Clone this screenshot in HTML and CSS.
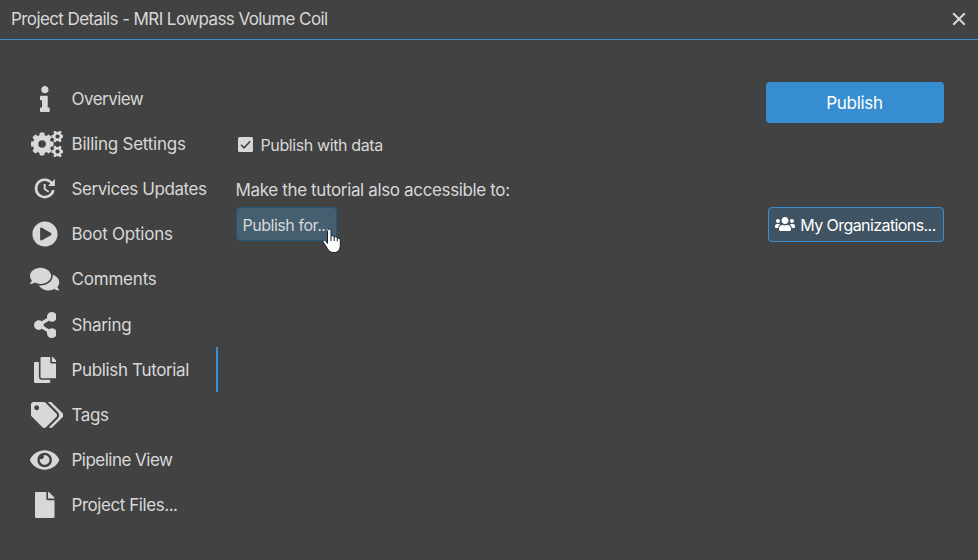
FILE: index.html
```html
<!DOCTYPE html>
<html lang="en">
<head>
<meta charset="utf-8">
<title>Project Details</title>
<link rel="stylesheet" href="styles.css">
</head>
<body>
<div class="dialog">
  <header class="titlebar">
    <h1 class="title">Project Details - MRI Lowpass Volume Coil</h1>
    <button class="close" aria-label="Close"><svg width="14" height="14" viewBox="0 0 14 14"><path d="M1.2 1.2L12.8 12.8M12.8 1.2L1.2 12.8" fill="none" stroke="currentColor" stroke-width="2"/></svg></button>
  </header>
  <div class="body">
    <nav class="menu">
      <a class="item"><span class="icon"><svg viewBox="0 0 192 512"><path d="M20 424.229h20V279.771H20c-11.046 0-20-8.954-20-20V212c0-11.046 8.954-20 20-20h112c11.046 0 20 8.954 20 20v212.229h20c11.046 0 20 8.954 20 20V492c0 11.046-8.954 20-20 20H20c-11.046 0-20-8.954-20-20v-47.771c0-11.046 8.954-20 20-20zM96 0C56.235 0 24 32.235 24 72s32.235 72 72 72 72-32.235 72-72S135.764 0 96 0z"/></svg></span><span class="label overview">Overview</span></a>
      <a class="item"><span class="icon wide"><svg viewBox="0 0 640 512">
        <defs>
          <rect id="tooth" x="-48" y="-228" width="96" height="100" rx="22"/>
          <rect id="tooth-small" x="-27" y="-120" width="54" height="60" rx="12"/>
          <g id="gear-small">
            <circle r="66" fill="none" stroke="currentColor" stroke-width="50"/>
            <use href="#tooth-small" transform="rotate(30)"/><use href="#tooth-small" transform="rotate(90)"/><use href="#tooth-small" transform="rotate(150)"/><use href="#tooth-small" transform="rotate(210)"/><use href="#tooth-small" transform="rotate(270)"/><use href="#tooth-small" transform="rotate(330)"/>
          </g>
        </defs>
        <g transform="translate(218 256)">
          <circle r="128" fill="none" stroke="currentColor" stroke-width="108"/>
          <use href="#tooth"/><use href="#tooth" transform="rotate(45)"/><use href="#tooth" transform="rotate(90)"/><use href="#tooth" transform="rotate(135)"/><use href="#tooth" transform="rotate(180)"/><use href="#tooth" transform="rotate(225)"/><use href="#tooth" transform="rotate(270)"/><use href="#tooth" transform="rotate(315)"/>
        </g>
        <use href="#gear-small" transform="translate(522 108)"/>
        <use href="#gear-small" transform="translate(522 404)"/>
      </svg></span><span class="label billing">Billing Settings</span></a>
      <a class="item"><span class="icon"><svg viewBox="0 0 26 26"><path d="M20.200 7.900A8.700 8.700 0 1 0 21.300 14" fill="none" stroke="currentColor" stroke-width="2.600"/><path d="M22.900 3v7h-7zM11.700 8h1.900v4.700l3.700 2.200-1 1.500-4.600-2.800z"/></svg></span><span class="label services">Services Updates</span></a>
      <a class="item"><span class="icon"><svg viewBox="0 0 512 512"><path d="M256 8C119 8 8 119 8 256s111 248 248 248 248-111 248-248S393 8 256 8zm115.700 272l-176 101c-15.800 8.800-35.700-2.500-35.700-21V152c0-18.400 19.800-29.800 35.700-21l176 107c16.400 9.200 16.400 32.900 0 42z"/></svg></span><span class="label boot">Boot Options</span></a>
      <a class="item"><span class="icon"><svg viewBox="0 0 576 512"><path d="M416 192c0-88.400-93.100-160-208-160S0 103.600 0 192c0 34.300 14.100 65.900 38 92-13.400 30.200-35.500 54.200-35.800 54.500-2.200 2.300-2.800 5.700-1.500 8.700S4.800 352 8 352c36.600 0 66.900-12.300 88.700-25 32.200 15.700 70.300 25 111.300 25 114.900 0 208-71.600 208-160zm122 220c23.900-26 38-57.700 38-92 0-66.900-53.500-124.200-129.300-148.100.9 6.600 1.300 13.300 1.300 20.100 0 105.900-107.700 192-240 192-10.800 0-21.300-.8-31.700-1.900C207.800 439.600 281.800 480 368 480c41 0 79.100-9.200 111.300-25 21.800 12.700 52.100 25 88.700 25 3.200 0 6.100-1.900 7.300-4.800 1.300-2.900.7-6.300-1.500-8.700-.3-.3-22.400-24.200-35.800-54.500z"/></svg></span><span class="label comments">Comments</span></a>
      <a class="item"><span class="icon"><svg viewBox="0 0 448 512"><path d="M352 320c-22.608 0-43.387 7.819-59.790 20.895l-102.486-64.054a96.551 96.551 0 0 0 0-41.683l102.486-64.054C308.613 184.181 329.392 192 352 192c53.019 0 96-42.981 96-96S405.019 0 352 0s-96 42.981-96 96c0 7.158.790 14.130 2.276 20.841L155.790 180.895C139.387 167.819 118.608 160 96 160c-53.019 0-96 42.981-96 96s42.981 96 96 96c22.608 0 43.387-7.819 59.790-20.895l102.486 64.054A96.301 96.301 0 0 0 256 416c0 53.019 42.981 96 96 96s96-42.981 96-96-42.981-96-96-96z"/></svg></span><span class="label sharing">Sharing</span></a>
      <a class="item active"><span class="icon"><svg viewBox="0 0 448 512"><path d="M320 448v40c0 13.255-10.745 24-24 24H24c-13.255 0-24-10.745-24-24V120c0-13.255 10.745-24 24-24h72v296c0 30.879 25.121 56 56 56h168zm0-344V0H152c-13.255 0-24 10.745-24 24v368c0 13.255 10.745 24 24 24h272c13.255 0 24-10.745 24-24V128H344c-13.200 0-24-10.800-24-24zm120.971-31.029L375.029 7.029A24 24 0 0 0 358.059 0H352v96h96v-6.059a24 24 0 0 0-7.029-16.970z"/></svg></span><span class="label tutorial">Publish Tutorial</span></a>
      <a class="item"><span class="icon wide"><svg viewBox="0 0 640 512"><path d="M497.941 225.941L286.059 14.059A48 48 0 0 0 252.118 0H48C21.490 0 0 21.490 0 48v204.118a48 48 0 0 0 14.059 33.941l211.882 211.882c18.744 18.745 49.136 18.746 67.882 0l204.118-204.118c18.745-18.745 18.745-49.137 0-67.882zM112 160c-26.510 0-48-21.490-48-48s21.490-48 48-48 48 21.490 48 48-21.490 48-48 48zm513.941 133.823L421.823 497.941c-18.745 18.745-49.137 18.745-67.882 0l-.360-.360L527.640 323.522c16.999-16.999 26.360-39.600 26.360-63.640s-9.362-46.641-26.360-63.640L331.397 0h48.721a48 48 0 0 1 33.941 14.059l211.882 211.882c18.745 18.745 18.745 49.137 0 67.882z"/></svg></span><span class="label tags">Tags</span></a>
      <a class="item"><span class="icon"><svg viewBox="0 0 576 512"><path d="M572.520 241.400C518.290 135.590 410.930 64 288 64S57.680 135.640 3.480 241.410a32.350 32.350 0 0 0 0 29.190C57.710 376.410 165.070 448 288 448s230.320-71.640 284.520-177.410a32.350 32.350 0 0 0 0-29.190zM288 400a144 144 0 1 1 144-144 143.930 143.930 0 0 1-144 144zm0-240a95.310 95.310 0 0 0-25.310 3.790 47.850 47.850 0 0 1-66.900 66.900A95.780 95.780 0 1 0 288 160z"/></svg></span><span class="label pipeline">Pipeline View</span></a>
      <a class="item"><span class="icon"><svg viewBox="0 0 384 512"><path d="M224 136V0H24C10.700 0 0 10.700 0 24v464c0 13.300 10.700 24 24 24h336c13.300 0 24-10.700 24-24V160H248c-13.200 0-24-10.800-24-24zm160-14.100v6.100H256V0h6.100c6.400 0 12.500 2.500 17 7l97.900 98c4.500 4.500 7 10.600 7 16.900z"/></svg></span><span class="label files">Project Files...</span></a>
    </nav>
    <main class="content">
      <div class="row first"><button class="publish">Publish</button></div>
      <label class="check"><svg width="15" height="15" viewBox="0 0 15 15"><rect width="15" height="15" rx="1.500"/><path d="M3 7.800l3 3 6.200-6.600" fill="none" stroke="#424242" stroke-width="1.500"/></svg><span>Publish with data</span></label>
      <p class="note">Make the tutorial also accessible to:</p>
      <div class="row">
        <button class="for">Publish for...
          <svg class="cursor" width="20" height="26" viewBox="0 0 20 26"><path d="M5.500 15.500V3.300c0-3 3.500-3 3.500 0V8c1.700-.8 3 0 3.200 1 1.600-.7 2.900.1 3.100 1.300 1.800-.5 3 .5 3 2.400v4.500c0 4-2 7.300-6.300 7.300-4 0-5-1.500-6.700-4.200l-3.800-5.800c-1.200-2 .8-3.200 2.300-1.600z" fill="#fff" stroke="#1c1f2b" stroke-width="1"/><path d="M9 8v5M12.200 9v4M15.300 10.300V13.500" stroke="#1c1f2b" fill="none"/></svg>
        </button>
        <button class="orgs"><svg width="20" height="16" viewBox="0 0 640 512"><path d="M96 224c35.300 0 64-28.700 64-64s-28.700-64-64-64-64 28.700-64 64 28.700 64 64 64zm448 0c35.300 0 64-28.700 64-64s-28.700-64-64-64-64 28.700-64 64 28.700 64 64 64zm32 32h-64c-17.600 0-33.500 7.100-45.100 18.600 40.300 22.100 68.900 62 75.100 109.400h66c17.700 0 32-14.300 32-32v-32c0-35.300-28.700-64-64-64zm-256 0c61.900 0 112-50.100 112-112S381.900 32 320 32 208 82.100 208 144s50.100 112 112 112zm76.800 32h-8.300c-20.800 10-43.900 16-68.500 16s-47.600-6-68.500-16h-8.300C179.600 288 128 339.600 128 403.200V432c0 26.500 21.500 48 48 48h288c26.500 0 48-21.500 48-48v-28.800c0-63.600-51.600-115.200-115.200-115.200zm-223.700-13.400C161.500 263.100 145.600 256 128 256H64c-35.300 0-64 28.700-64 64v32c0 17.700 14.300 32 32 32h65.900c6.300-47.400 34.900-87.300 75.200-109.400z"/></svg><span>My Organizations...</span></button>
      </div>
    </main>
  </div>
</div>
</body>
</html>
```
FILE: styles.css
```css
* { box-sizing: border-box; }
body { margin: 0; background: #424242; color: #d8d8d8; font-family: Inter, "Liberation Sans", sans-serif; font-size: 17px; }
svg { fill: currentColor; flex: none; display: block; }
button { font: inherit; color: inherit; border: 0; background: none; padding: 0; white-space: nowrap; }
.dialog { height: 560px; overflow: hidden; }
.titlebar { height: 40px; border-bottom: 1px solid #398fd2; display: flex; align-items: center; justify-content: space-between; padding: 0 12px 2px 11px; }
.title { margin: 0; font-size: 17px; font-weight: 400; letter-spacing: -0.59px; }
.body { display: flex; }
.menu { width: 218px; padding-top: 36px; }
.item { height: 45.2px; display: flex; align-items: center; padding-left: 27px; white-space: nowrap; }
.active { border-right: 2px solid #398fd2; }
.icon { width: 36px; height: 26px; margin-right: 8.5px; display: flex; justify-content: center; }
.icon.wide { justify-content: flex-end; }
.icon svg { height: 26px; }
.overview { letter-spacing: -0.54px; }
.billing { letter-spacing: -0.23px; }
.services { letter-spacing: -0.42px; }
.boot { letter-spacing: -0.25px; }
.comments { letter-spacing: -0.2px; }
.sharing { letter-spacing: -0.28px; }
.tutorial { letter-spacing: -0.35px; }
.tags { letter-spacing: -0.4px; }
.pipeline { letter-spacing: -0.52px; }
.files { letter-spacing: -0.44px; }
.content { flex: 1; padding: 42px 34.5px 0 17.5px; }
.row { display: flex; justify-content: space-between; }
.first { justify-content: flex-end; }
.publish { width: 178px; height: 41px; border-radius: 4px; background: #368ed0; color: #fff; letter-spacing: -0.3px; }
.check { display: flex; gap: 8px; height: 20px; margin-top: 12px; padding-left: 2px; align-items: center; font-size: 16px; letter-spacing: -0.39px; }
.check svg { margin-top: -2px; }
.note { margin: 25px 0 7px; line-height: 20px; letter-spacing: -0.36px; }
.for { position: relative; width: 101px; height: 34px; padding-top: 1px; border: 1px solid #235777; border-radius: 4px; background: #455e70; font-size: 16px; letter-spacing: -0.45px; }
.cursor { position: absolute; left: 85px; top: 20px; }
.orgs { width: 176px; height: 35px; border: 1px solid #398fd2; border-radius: 4px; background: #405362; color: #fff; font-size: 16px; letter-spacing: -0.58px; display: flex; align-items: center; justify-content: center; gap: 5px; }
.orgs svg { margin-top: -2px; }
```
